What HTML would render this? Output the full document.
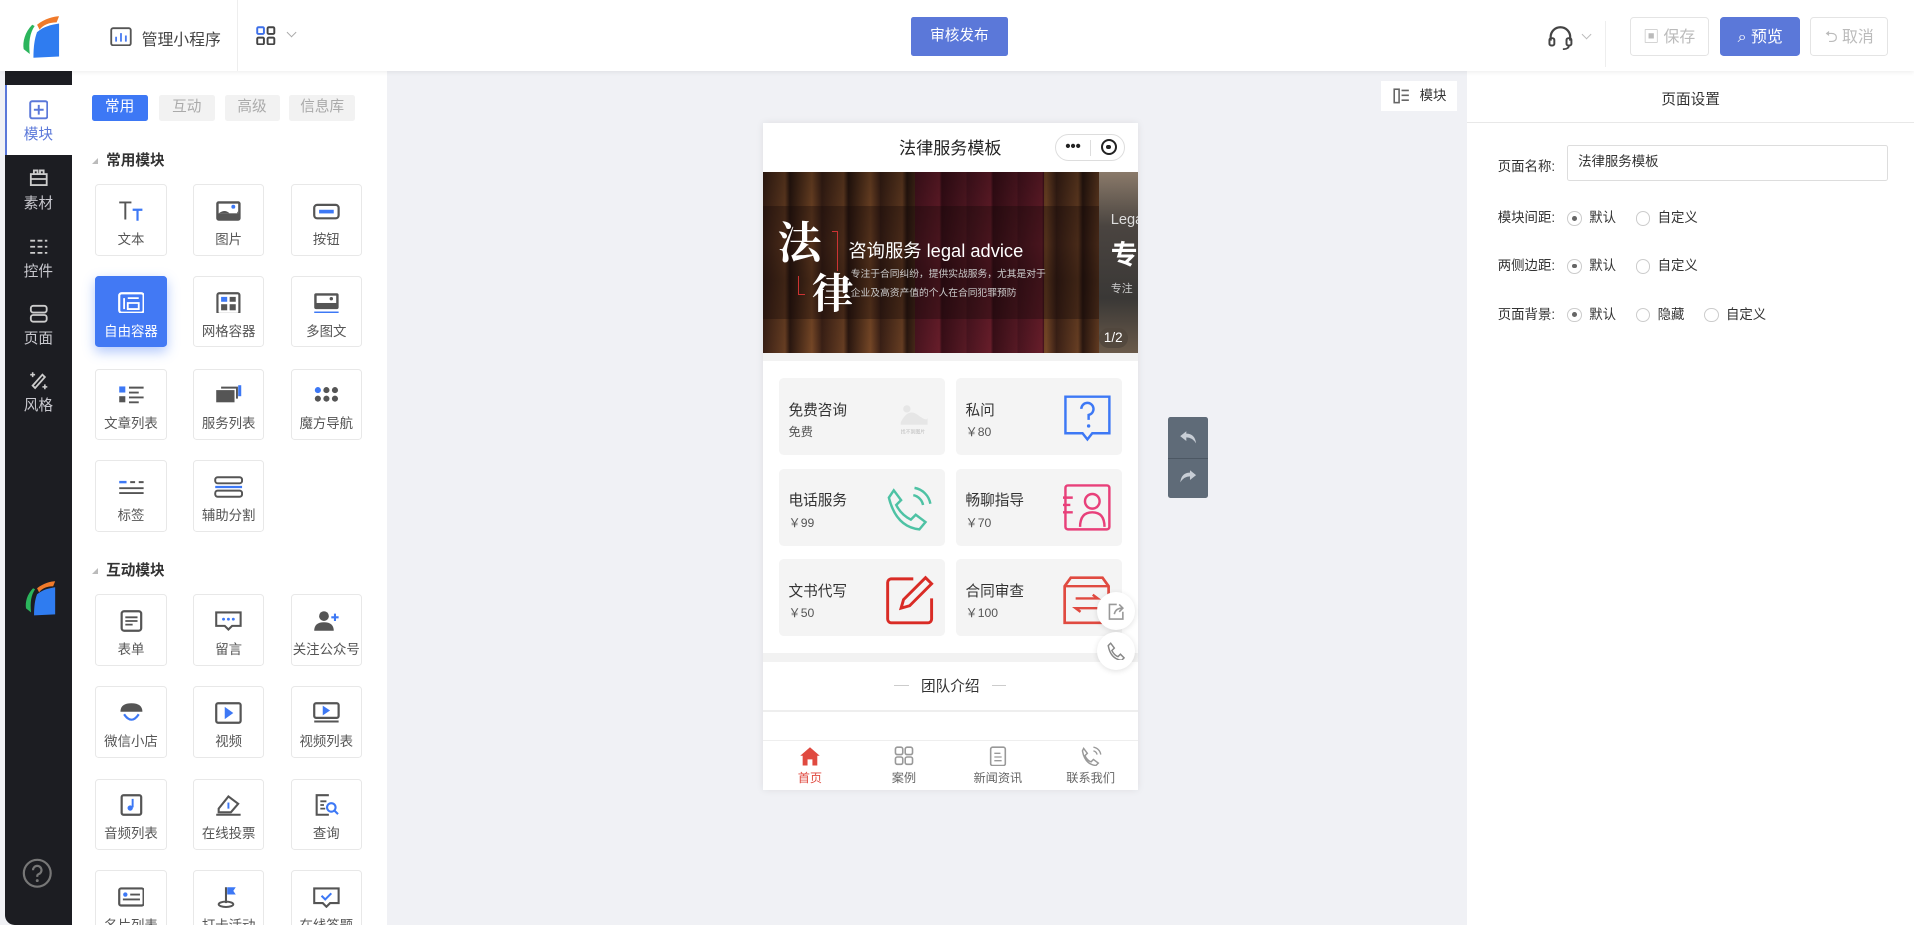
<!DOCTYPE html>
<html><head><meta charset="utf-8">
<style>
html,body{margin:0;padding:0;}
body{width:1914px;height:925px;overflow:hidden;background:#f0f1f5;font-family:"Liberation Sans","Noto Sans CJK SC",sans-serif;}
#z{zoom:1.22066;width:1568px;height:758px;position:relative;overflow:hidden;background:#f0f1f5;}
.a{position:absolute;}
.hdr{left:0;top:0;width:1568px;height:58px;background:#fff;box-shadow:0 1px 4px rgba(0,0,0,.08);z-index:3;}
.btn{position:absolute;top:14px;height:32px;border:1px solid #e4e4e4;border-radius:3px;font-size:13px;color:#bbb;line-height:32px;text-align:center;box-sizing:border-box;}
.side{left:4px;top:58px;width:55px;height:700px;background:#1c1d22;border-bottom-left-radius:8px;}
.si{position:absolute;left:0;width:55px;text-align:center;color:#c9c9cf;font-size:12px;}
.si svg{display:block;margin:0 auto 3px;}
.panel{left:59px;top:58px;width:258px;height:700px;background:#fff;}
.tab{position:absolute;top:20px;height:21px;line-height:21px;font-size:12px;text-align:center;border-radius:2px;background:#f2f2f2;color:#aaa;}
.sec{position:absolute;left:16px;font-size:12px;font-weight:bold;color:#333;}
.sec:before{content:"";display:inline-block;border:3px solid transparent;border-right-color:#bbb;border-bottom-color:#bbb;margin-right:7px;vertical-align:1px;}
.card{position:absolute;width:57px;height:57px;border:1px solid #e8e8e8;border-radius:3px;background:#fff;text-align:center;font-size:11px;color:#555;}
.card svg{display:block;margin:12px auto 5px;}
.card.on{background:#4279f4;border-color:#4279f4;color:#fff;box-shadow:0 4px 10px rgba(66,121,244,.4);}
.phone{left:625px;top:101px;width:307px;height:546px;background:#fff;box-shadow:0 0 6px rgba(0,0,0,.08);overflow:hidden;}
.cell{position:absolute;width:136px;height:63px;background:#f4f4f4;border-radius:4px;}
.cell .t{position:absolute;left:8px;top:17px;font-size:12px;color:#333;}
.cell .p{position:absolute;left:8px;top:36px;font-size:10px;color:#555;}
.cell svg{position:absolute;right:8px;top:12px;}
.rp{left:1202px;top:58px;width:366px;height:700px;background:#fff;}
.fl{position:absolute;left:25px;font-size:11px;color:#333;}
.rd{display:inline-block;width:12px;height:12px;border:1px solid #ccc;border-radius:50%;vertical-align:-3px;margin-right:6px;box-sizing:border-box;position:relative;}
.rd.c:after{content:"";position:absolute;left:3px;top:3px;width:4px;height:4px;border-radius:50%;background:#666;}
.opt{position:absolute;font-size:11px;color:#333;}
.tb{position:absolute;top:0;width:77px;text-align:center;font-size:10px;color:#666;}
.tb svg{display:block;margin:4px auto 1px;}
</style></head><body><div id="z">

<div class="a hdr">
  <svg class="a" style="left:16px;top:12px" width="34" height="36" viewBox="0 0 34 36"><path d="M10 8 C4 14 2 22 3 28 L8 32 C7 22 8 15 12 9Z" fill="#2bb55c"/><path d="M14 8 C20 3 28 1 32 1 L30 6 C24 6 19 8 16 12Z" fill="#f07a2a"/><path d="M14 14 C20 9 26 8 32 7 L32 34 L11 35 C11 26 12 19 14 14Z" fill="#2f7cf0"/></svg>
  <svg class="a" style="left:90px;top:22px" width="18" height="16" viewBox="0 0 18 16"><rect x="1" y="1" width="16" height="14" rx="1.5" fill="none" stroke="#555" stroke-width="1.5"/><path d="M5 12V8M9 12V5M13 12V7" stroke="#4a7cf0" stroke-width="1.5"/></svg>
  <div class="a" style="left:116px;top:22px;font-size:13px;color:#444">管理小程序</div>
  <div class="a" style="left:194px;top:0;width:1px;height:58px;background:#eee"></div>
  <svg class="a" style="left:210px;top:21px" width="16" height="16" viewBox="0 0 16 16"><rect x="1" y="1" width="5.5" height="5.5" rx="1" fill="none" stroke="#3d6fe8" stroke-width="1.6"/><rect x="9.5" y="1" width="5.5" height="5.5" rx="1" fill="none" stroke="#444" stroke-width="1.6"/><rect x="1" y="9.5" width="5.5" height="5.5" rx="1" fill="none" stroke="#444" stroke-width="1.6"/><rect x="9.5" y="9.5" width="5.5" height="5.5" rx="1" fill="none" stroke="#444" stroke-width="1.6"/></svg>
  <div class="a" style="left:236px;top:24px;width:5px;height:5px;border-right:1px solid #aaa;border-bottom:1px solid #aaa;transform:rotate(45deg)"></div>
  <div class="a" style="left:746px;top:14px;width:80px;height:32px;background:#5b78d9;color:#fff;font-size:12px;line-height:32px;text-align:center;border-radius:2px">审核发布</div>
  <svg class="a" style="left:1267px;top:21px" width="22" height="20" viewBox="0 0 22 20"><path d="M3 12V9a8 8 0 0 1 16 0v3" fill="none" stroke="#444" stroke-width="1.8"/><rect x="2" y="10" width="4" height="6" rx="1.5" fill="none" stroke="#444" stroke-width="1.6"/><rect x="16" y="10" width="4" height="6" rx="1.5" fill="none" stroke="#444" stroke-width="1.6"/><path d="M18 16q0 3-5 3" fill="none" stroke="#444" stroke-width="1.4"/></svg>
  <div class="a" style="left:1297px;top:25px;width:5px;height:5px;border-right:1px solid #bbb;border-bottom:1px solid #bbb;transform:rotate(45deg)"></div>
  <div class="a" style="left:1315px;top:17px;width:1px;height:38px;background:#eee"></div>
  <div class="btn" style="left:1335px;width:65px">▣ 保存</div>
  <div class="btn" style="left:1409px;width:66px;background:#5b78d9;border-color:#5b78d9;color:#fff">⌕ 预览</div>
  <div class="btn" style="left:1483px;width:64px">⮌ 取消</div>
</div>

<div class="a side">
  <div class="a" style="left:0;top:12px;width:55px;height:57px;background:#fff;border-left:2px solid #5b78d9;box-sizing:border-box"></div>
  <div class="si" style="top:24px;color:#5b78d9"><svg width="16" height="16" viewBox="0 0 16 16"><rect x="1" y="1" width="14" height="14" rx="1.5" fill="none" stroke="#5b78d9" stroke-width="1.6"/><path d="M8 4v8M4 8h8" stroke="#5b78d9" stroke-width="1.6"/></svg>模块</div>
  <div class="si" style="top:80px"><svg width="16" height="16" viewBox="0 0 16 16"><rect x="1.5" y="5" width="13" height="9" fill="none" stroke="#ccc" stroke-width="1.5"/><path d="M4 5V2h3v3M9 5V2h3v3M2 9h12" fill="none" stroke="#ccc" stroke-width="1.5"/></svg>素材</div>
  <div class="si" style="top:136px"><svg width="16" height="16" viewBox="0 0 16 16"><path d="M1 3h14M1 8h14M1 13h14" stroke="#ccc" stroke-width="1.5" stroke-dasharray="4 2"/></svg>控件</div>
  <div class="si" style="top:191px"><svg width="16" height="16" viewBox="0 0 16 16"><rect x="1.5" y="1.5" width="13" height="5.5" rx="2" fill="none" stroke="#ccc" stroke-width="1.5"/><rect x="1.5" y="9" width="13" height="5.5" rx="2" fill="none" stroke="#ccc" stroke-width="1.5"/></svg>页面</div>
  <div class="si" style="top:246px"><svg width="16" height="16" viewBox="0 0 16 16"><path d="M5 14L13 5l-2-2-8 9z" fill="none" stroke="#ccc" stroke-width="1.5"/><path d="M3 1v4M1 3h4M13 11v4M11 13h4" stroke="#ccc" stroke-width="1.3"/></svg>风格</div>
  <svg class="a" style="left:15px;top:417px" width="28" height="30" viewBox="0 0 34 36"><path d="M10 8 C4 14 2 22 3 28 L8 32 C7 22 8 15 12 9Z" fill="#2bb55c"/><path d="M14 8 C20 3 28 1 32 1 L30 6 C24 6 19 8 16 12Z" fill="#f07a2a"/><path d="M14 14 C20 9 26 8 32 7 L32 34 L11 35 C11 26 12 19 14 14Z" fill="#2f7cf0"/></svg>
  <svg class="a" style="left:14px;top:645px" width="25" height="25" viewBox="0 0 25 25"><circle cx="12.5" cy="12.5" r="11" fill="none" stroke="#777" stroke-width="1.8"/><path d="M9 10a3.5 3.5 0 1 1 4.5 3.3c-1 .4-1 1-1 2.2" fill="none" stroke="#777" stroke-width="1.8"/><circle cx="12.5" cy="18.5" r="1.2" fill="#777"/></svg>
</div>

<div class="a panel">
  <div class="tab" style="left:16px;width:46px;background:#3d78f5;color:#fff">常用</div>
  <div class="tab" style="left:71px;width:46px">互动</div>
  <div class="tab" style="left:125px;width:45px">高级</div>
  <div class="tab" style="left:178px;width:54px">信息库</div>
  <div class="sec" style="top:64px">常用模块</div>

  <div class="card" style="left:19px;top:93px"><svg width="22" height="18" viewBox="0 0 22 18"><path d="M1 2h10M6 2v14" stroke="#555" stroke-width="1.6"/><path d="M12 8h8M16 8v9" stroke="#3d78f5" stroke-width="1.8"/></svg>文本</div>
  <div class="card" style="left:99px;top:93px"><svg width="22" height="18" viewBox="0 0 22 18"><rect x="1" y="1" width="20" height="16" rx="2" fill="#555"/><rect x="3" y="3" width="16" height="8" fill="#fff"/><path d="M3 11q5-4 9 0t7-2v2z" fill="#555"/><circle cx="15" cy="5.5" r="1.6" fill="#3d78f5"/></svg>图片</div>
  <div class="card" style="left:179px;top:93px"><svg width="22" height="18" viewBox="0 0 22 18"><rect x="1" y="4" width="20" height="11" rx="2.5" fill="none" stroke="#555" stroke-width="1.8"/><rect x="5" y="8" width="12" height="3" fill="#3d78f5"/></svg>按钮</div>

  <div class="card on" style="left:19px;top:168px"><svg width="22" height="18" viewBox="0 0 22 18"><rect x="1" y="1" width="20" height="16" rx="2" fill="none" stroke="#fff" stroke-width="1.8"/><path d="M5 5v9M8 5h9M8 9h9v5H8z" fill="none" stroke="#fff" stroke-width="1.5"/></svg>自由容器</div>
  <div class="card" style="left:99px;top:168px"><svg width="22" height="18" viewBox="0 0 22 18"><rect x="2" y="1" width="18" height="17" rx="1.5" fill="none" stroke="#555" stroke-width="1.8"/><rect x="5" y="4" width="5" height="4" fill="#3d78f5"/><rect x="12" y="4" width="5" height="4" fill="#555"/><rect x="5" y="10" width="5" height="5" fill="#555"/><rect x="12" y="10" width="5" height="5" fill="#555"/></svg>网格容器</div>
  <div class="card" style="left:179px;top:168px"><svg width="22" height="18" viewBox="0 0 22 18"><rect x="1" y="1" width="20" height="13" rx="1.5" fill="#555"/><rect x="3" y="3" width="16" height="6" fill="#fff"/><circle cx="15" cy="5.5" r="1.4" fill="#555"/><rect x="1" y="16" width="20" height="1.5" fill="#3d78f5"/></svg>多图文</div>

  <div class="card" style="left:19px;top:244px"><svg width="22" height="18" viewBox="0 0 22 18"><rect x="1" y="2" width="5" height="5" fill="#3d78f5"/><rect x="1" y="10" width="5" height="5" fill="#555"/><path d="M9 3h12M9 7h8M9 11h12M9 15h8" stroke="#555" stroke-width="1.6"/></svg>文章列表</div>
  <div class="card" style="left:99px;top:244px"><svg width="22" height="18" viewBox="0 0 22 18"><rect x="1" y="5" width="15" height="10" fill="#555"/><path d="M5 3h13v9" fill="none" stroke="#555" stroke-width="1.6"/><rect x="19" y="1" width="2.5" height="9" fill="#3d78f5"/></svg>服务列表</div>
  <div class="card" style="left:179px;top:244px"><svg width="22" height="18" viewBox="0 0 22 18"><circle cx="4" cy="5" r="2.5" fill="#3d78f5"/><circle cx="11" cy="5" r="2.5" fill="#555"/><circle cx="18" cy="5" r="2.5" fill="#555"/><circle cx="4" cy="12" r="2.5" fill="#555"/><circle cx="11" cy="12" r="2.5" fill="#555"/><circle cx="18" cy="12" r="2.5" fill="#555"/></svg>魔方导航</div>

  <div class="card" style="left:19px;top:319px"><svg width="22" height="18" viewBox="0 0 22 18"><path d="M1 5h6" stroke="#3d78f5" stroke-width="2"/><path d="M10 5h4M17 5h4M1 10h20M1 14h20" stroke="#555" stroke-width="1.6"/></svg>标签</div>
  <div class="card" style="left:99px;top:319px"><svg width="24" height="18" viewBox="0 0 24 18"><rect x="1" y="1" width="22" height="5" rx="2" fill="none" stroke="#555" stroke-width="1.6"/><rect x="1" y="12" width="22" height="5" rx="2" fill="none" stroke="#555" stroke-width="1.6"/><path d="M1 9h22" stroke="#3d78f5" stroke-width="1.8"/></svg>辅助分割</div>

  <div class="sec" style="top:400px">互动模块</div>
  <div class="card" style="left:19px;top:429px"><svg width="22" height="18" viewBox="0 0 22 18"><rect x="3" y="1" width="16" height="16" rx="2" fill="none" stroke="#555" stroke-width="1.8"/><path d="M6 6h10M6 9h10M6 12h6" stroke="#555" stroke-width="1.5"/></svg>表单</div>
  <div class="card" style="left:99px;top:429px"><svg width="22" height="18" viewBox="0 0 22 18"><path d="M1 2h20v11h-7l-3 3-3-3H1z" fill="none" stroke="#555" stroke-width="1.7"/><circle cx="7" cy="7.5" r="1.2" fill="#3d78f5"/><circle cx="11" cy="7.5" r="1.2" fill="#3d78f5"/><circle cx="15" cy="7.5" r="1.2" fill="#3d78f5"/></svg>留言</div>
  <div class="card" style="left:179px;top:429px"><svg width="22" height="18" viewBox="0 0 22 18"><circle cx="9" cy="5" r="4" fill="#555"/><path d="M1 17q0-7 8-7t8 7z" fill="#555"/><path d="M18 3v6M15 6h6" stroke="#3d78f5" stroke-width="1.7"/></svg>关注公众号</div>

  <div class="card" style="left:19px;top:504px"><svg width="22" height="18" viewBox="0 0 22 18"><path d="M2 8q0-7 9-7t9 7z" fill="#555"/><path d="M5 10q6 9 12 0" fill="none" stroke="#3d78f5" stroke-width="1.8"/></svg>微信小店</div>
  <div class="card" style="left:99px;top:504px"><svg width="22" height="18" viewBox="0 0 22 18"><rect x="1" y="1" width="20" height="16" rx="1.5" fill="none" stroke="#555" stroke-width="1.8"/><path d="M8 4v10l7-5z" fill="#3d78f5"/></svg>视频</div>
  <div class="card" style="left:179px;top:504px"><svg width="22" height="18" viewBox="0 0 22 18"><rect x="1" y="1" width="20" height="12" rx="1.5" fill="none" stroke="#555" stroke-width="1.8"/><path d="M8 3v8l6-4z" fill="#3d78f5"/><path d="M1 16h20" stroke="#555" stroke-width="1.6"/></svg>视频列表</div>

  <div class="card" style="left:19px;top:580px"><svg width="22" height="18" viewBox="0 0 22 18"><rect x="3" y="1" width="16" height="16" rx="1.5" fill="none" stroke="#555" stroke-width="1.8"/><path d="M12 4v7" stroke="#3d78f5" stroke-width="1.6"/><circle cx="10" cy="11.5" r="2.2" fill="#3d78f5"/></svg>音频列表</div>
  <div class="card" style="left:99px;top:580px"><svg width="22" height="18" viewBox="0 0 22 18"><path d="M3 12l8-10 8 6-6 7H3z" fill="none" stroke="#555" stroke-width="1.7"/><path d="M1 17h20" stroke="#555" stroke-width="1.6"/><path d="M11 7v5" stroke="#3d78f5" stroke-width="1.6"/></svg>在线投票</div>
  <div class="card" style="left:179px;top:580px"><svg width="22" height="18" viewBox="0 0 22 18"><path d="M13 1H3v16h10" fill="none" stroke="#555" stroke-width="1.7"/><path d="M6 6h5M6 9h3M6 12h4" stroke="#555" stroke-width="1.5"/><circle cx="15" cy="11" r="3.5" fill="none" stroke="#3d78f5" stroke-width="1.7"/><path d="M17.5 13.5l3 3" stroke="#3d78f5" stroke-width="1.7"/></svg>查询</div>

  <div class="card" style="left:19px;top:655px"><svg width="22" height="18" viewBox="0 0 22 18"><rect x="1" y="2" width="20" height="14" rx="1.5" fill="none" stroke="#555" stroke-width="1.8"/><circle cx="6" cy="7" r="1.8" fill="#3d78f5"/><path d="M10 7h8M4 11h14" stroke="#555" stroke-width="1.5"/></svg>名片列表</div>
  <div class="card" style="left:99px;top:655px"><svg width="22" height="18" viewBox="0 0 22 18"><path d="M9 1v13" stroke="#555" stroke-width="1.7"/><path d="M10 1h7l-2 3 2 3h-7z" fill="#3d78f5"/><ellipse cx="9" cy="15" rx="6" ry="2.2" fill="none" stroke="#555" stroke-width="1.6"/></svg>打卡活动</div>
  <div class="card" style="left:179px;top:655px"><svg width="22" height="18" viewBox="0 0 22 18"><path d="M1 2h20v12h-7l-3 3-3-3H1z" fill="none" stroke="#555" stroke-width="1.7"/><path d="M7 8l3 3 5-5" fill="none" stroke="#3d78f5" stroke-width="1.7"/></svg>在线答题</div>
</div>

<div class="a" style="left:1131px;top:66px;width:63px;height:25px;background:#fff;font-size:11px;color:#333;line-height:25px">
  <svg class="a" style="left:10px;top:6px" width="14" height="13" viewBox="0 0 14 13"><rect x="1" y="1" width="4" height="11" fill="none" stroke="#666" stroke-width="1.3"/><path d="M7 2h6M7 6h6M7 10h6" stroke="#666" stroke-width="1.3"/></svg>
  <span class="a" style="left:32px;top:0">模块</span>
</div>

<div class="a phone">
  <div class="a" style="left:0;top:0;width:307px;height:40px;text-align:center;line-height:42px;font-size:14px;color:#222">法律服务模板</div>
  <div class="a" style="left:239px;top:9px;width:58px;height:22px;border:1px solid #ddd;border-radius:12px;box-sizing:border-box">
    <div class="a" style="left:8px;top:4px;font-size:12px;line-height:12px;font-weight:bold;color:#222">•••</div>
    <div class="a" style="left:28px;top:4px;width:1px;height:13px;background:#ddd"></div>
    <div class="a" style="left:37px;top:3px;width:10px;height:10px;border:2px solid #222;border-radius:50%"><div style="width:4px;height:4px;margin:3px;background:#222;border-radius:50%"></div></div>
  </div>
  <div class="a" style="left:0;top:40px;width:275px;height:148px;background:repeating-linear-gradient(90deg,#3a2016 0,#6a4024 18px,#2a1710 22px,#7a4a28 40px,#3f2318 48px),#3a2016"></div>
  <div class="a" style="left:125px;top:40px;width:105px;height:148px;background:repeating-linear-gradient(90deg,#4a1420 0,#6b1e2c 20px,#3a0e18 22px,#5a1a26 42px)"></div>
  <div class="a" style="left:0;top:40px;width:275px;height:148px;background:linear-gradient(180deg,rgba(0,0,0,.3),rgba(0,0,0,.05) 40%,rgba(0,0,0,.2) 60%,rgba(40,20,10,.05))"></div>
  <div class="a" style="left:0;top:68px;width:275px;height:92px;background:rgba(20,10,8,.35)"></div>
  <div class="a" style="left:12px;top:78px;font-family:'Noto Serif CJK SC',serif;font-size:36px;color:#fff;font-weight:bold;line-height:36px">法</div>
  <div class="a" style="left:40px;top:120px;font-family:'Noto Serif CJK SC',serif;font-size:34px;color:#fff;font-weight:bold;line-height:34px">律</div>
  <div class="a" style="left:57px;top:88px;width:4px;height:32px;border-right:1px solid #c33;border-top:1px solid #c33"></div>
  <div class="a" style="left:29px;top:125px;width:5px;height:15px;border-left:1px solid #c33;border-bottom:1px solid #c33"></div>
  <div class="a" style="left:70px;top:93px;font-size:15px;color:#fff;white-space:nowrap">咨询服务 legal advice</div>
  <div class="a" style="left:72px;top:116px;font-size:8px;color:#ccc;line-height:16px;white-space:nowrap">专注于合同纠纷，提供实战服务，尤其是对于<br>企业及高资产值的个人在合同犯罪预防</div>
  <div class="a" style="left:275px;top:40px;width:32px;height:148px;background:linear-gradient(180deg,#8a7a6a,#4a4440 30%,#3a3836 70%,#6a5a4a)"></div>
  <div class="a" style="left:285px;top:73px;font-size:12px;color:#ddd">Lega</div>
  <div class="a" style="left:285px;top:90px;font-size:22px;color:#fff;font-weight:bold">专</div>
  <div class="a" style="left:285px;top:128px;font-size:9px;color:#ccc">专注</div>
  <div class="a" style="left:275px;top:168px;width:24px;height:16px;background:rgba(80,70,60,.8);border-radius:8px;color:#fff;font-size:11px;text-align:center;line-height:16px">1/2</div>
  <div class="a" style="left:0;top:188px;width:307px;height:7px;background:#f2f2f2"></div>

  <div class="cell" style="left:13px;top:209px"><div class="t">免费咨询</div><div class="p">免费</div><svg width="36" height="36" viewBox="0 0 36 36"><path d="M8 24q6-12 14-6t8 2v6H8z" fill="#e6e6e6"/><circle cx="13" cy="13" r="3" fill="#e6e6e6"/><text x="18" y="33" font-size="4" fill="#bbb" text-anchor="middle">找不到图片</text></svg></div>
  <div class="cell" style="left:158px;top:209px"><div class="t">私问</div><div class="p">￥80</div><svg width="40" height="40" viewBox="0 0 40 40"><path d="M2 3h36v30H24l-4 5-4-5H2z" fill="none" stroke="#3d78f5" stroke-width="2"/><path d="M15 13a5 5 0 1 1 6 5v4" fill="none" stroke="#3d78f5" stroke-width="2"/><circle cx="21" cy="27" r="1.4" fill="#3d78f5"/></svg></div>
  <div class="cell" style="left:13px;top:283px"><div class="t">电话服务</div><div class="p">￥99</div><svg width="42" height="42" viewBox="0 0 42 42"><path d="M8 6l6 8-4 4q4 8 12 12l4-4 8 6-5 6Q10 36 4 12z" fill="none" stroke="#4ec2a4" stroke-width="2"/><path d="M24 10a10 10 0 0 1 8 8M25 4a16 16 0 0 1 13 13" fill="none" stroke="#4ec2a4" stroke-width="2"/></svg></div>
  <div class="cell" style="left:158px;top:283px"><div class="t">畅聊指导</div><div class="p">￥70</div><svg width="40" height="40" viewBox="0 0 40 40"><rect x="2" y="2" width="36" height="36" rx="2" fill="none" stroke="#e8407a" stroke-width="2"/><circle cx="24" cy="15" r="6" fill="none" stroke="#e8407a" stroke-width="2"/><path d="M14 36q0-12 10-12t10 12" fill="none" stroke="#e8407a" stroke-width="2"/><path d="M0 12h8M0 18h6M0 24h8" stroke="#e8407a" stroke-width="2"/></svg></div>
  <div class="cell" style="left:13px;top:357px"><div class="t">文书代写</div><div class="p">￥50</div><svg width="42" height="42" viewBox="0 0 42 42"><path d="M24 4H6a3 3 0 0 0-3 3v30a3 3 0 0 0 3 3h30a3 3 0 0 0 3-3V20" fill="none" stroke="#d92b25" stroke-width="2.4"/><path d="M34 3l5 5-18 18-7 2 2-7z" fill="none" stroke="#d92b25" stroke-width="2.4"/></svg></div>
  <div class="cell" style="left:158px;top:357px"><div class="t">合同审查</div><div class="p">￥100</div><svg width="42" height="42" viewBox="0 0 42 42"><path d="M3 10l5-7h26l5 7v30H3z" fill="none" stroke="#e04a40" stroke-width="2.2"/><path d="M3 10h36M12 20h18l-4-3M30 28H12l4 3" fill="none" stroke="#e04a40" stroke-width="2"/></svg></div>

  <div class="a" style="left:0;top:434px;width:307px;height:7px;background:#f2f2f2"></div>
  <div class="a" style="left:0;top:452px;width:307px;text-align:center;font-size:12px;color:#333"><span style="display:inline-block;width:12px;height:1px;background:#ccc;vertical-align:4px;margin-right:10px"></span>团队介绍<span style="display:inline-block;width:12px;height:1px;background:#ccc;vertical-align:4px;margin-left:10px"></span></div>
  <div class="a" style="left:0;top:481px;width:307px;height:1px;background:#eee"></div>
  <div class="a" style="left:0;top:505px;width:307px;height:41px;border-top:1px solid #eee">
    <div class="tb" style="left:0;color:#e04a40"><svg width="18" height="17" viewBox="0 0 18 17"><path d="M9 1L1 8h2v8h4v-5h4v5h4V8h2z" fill="#e04a40"/></svg>首页</div>
    <div class="tb" style="left:77px"><svg width="18" height="17" viewBox="0 0 18 17"><rect x="2" y="1" width="6" height="6" rx="1.5" fill="none" stroke="#999" stroke-width="1.3"/><rect x="10" y="1" width="6" height="6" rx="1.5" fill="none" stroke="#999" stroke-width="1.3"/><rect x="2" y="9" width="6" height="6" rx="1.5" fill="none" stroke="#999" stroke-width="1.3"/><rect x="10" y="9" width="6" height="6" rx="1.5" fill="none" stroke="#999" stroke-width="1.3"/></svg>案例</div>
    <div class="tb" style="left:154px"><svg width="18" height="17" viewBox="0 0 18 17"><rect x="3" y="1" width="12" height="15" rx="1.5" fill="none" stroke="#999" stroke-width="1.3"/><path d="M6 6h5M6 9h6M6 12h6" stroke="#999" stroke-width="1.1"/></svg>新闻资讯</div>
    <div class="tb" style="left:230px"><svg width="18" height="17" viewBox="0 0 18 17"><path d="M3 2l3 4-2 2q2 4 5 5l2-2 4 3-2 2Q4 15 2 4z" fill="none" stroke="#999" stroke-width="1.2"/><path d="M11 4a4 4 0 0 1 3 3M11 1a7 7 0 0 1 6 6" fill="none" stroke="#999" stroke-width="1.1"/></svg>联系我们</div>
  </div>
</div>
<div class="a" style="left:899px;top:485px;width:31px;height:31px;border-radius:50%;background:#fff;box-shadow:0 1px 5px rgba(0,0,0,.12)"><svg style="margin:8px" width="15" height="15" viewBox="0 0 15 15"><path d="M8 2H2v12h11V8" fill="none" stroke="#999" stroke-width="1.3"/><path d="M6 10q1-5 7-5M10 2l3 3-3 3" fill="none" stroke="#999" stroke-width="1.3"/></svg></div>
<div class="a" style="left:899px;top:518px;width:31px;height:31px;border-radius:50%;background:#fff;box-shadow:0 1px 5px rgba(0,0,0,.12)"><svg style="margin:8px" width="15" height="15" viewBox="0 0 15 15"><path d="M3 1l3 4-2 2q2 4 5 5l2-2 3 3-2 2Q3 14 1 3z" fill="none" stroke="#888" stroke-width="1.2"/></svg></div>

<div class="a" style="left:957px;top:342px;width:33px;height:66px;background:#5f6b78;border-radius:2px">
  <svg class="a" style="left:9px;top:10px" width="15" height="13" viewBox="0 0 15 13"><path d="M6 1L1 5l5 4V6q5 0 8 5-1-8-8-8z" fill="#c8ced6"/></svg>
  <div class="a" style="left:0;top:33px;width:33px;height:1px;background:#4c5763"></div>
  <svg class="a" style="left:9px;top:42px" width="15" height="13" viewBox="0 0 15 13"><path d="M9 1l5 4-5 4V6q-5 0-8 5 1-8 8-8z" fill="#c8ced6"/></svg>
</div>

<div class="a rp">
  <div class="a" style="left:0;top:0;width:366px;height:42px;border-bottom:1px solid #e8e8e8"></div>
  <div class="a" style="left:0;top:14px;width:366px;text-align:center;font-size:12px;color:#333">页面设置</div>
  <div class="fl" style="top:69px">页面名称:</div>
  <div class="a" style="left:82px;top:61px;width:263px;height:29px;border:1px solid #ddd;border-radius:2px;box-sizing:border-box;font-size:11px;color:#333;line-height:27px;padding-left:8px">法律服务模板</div>
  <div class="fl" style="top:111px">模块间距:</div>
  <div class="opt" style="left:82px;top:111px"><span class="rd c"></span>默认</div>
  <div class="opt" style="left:138px;top:111px"><span class="rd"></span>自定义</div>
  <div class="fl" style="top:150px">两侧边距:</div>
  <div class="opt" style="left:82px;top:150px"><span class="rd c"></span>默认</div>
  <div class="opt" style="left:138px;top:150px"><span class="rd"></span>自定义</div>
  <div class="fl" style="top:190px">页面背景:</div>
  <div class="opt" style="left:82px;top:190px"><span class="rd c"></span>默认</div>
  <div class="opt" style="left:138px;top:190px"><span class="rd"></span>隐藏</div>
  <div class="opt" style="left:194px;top:190px"><span class="rd"></span>自定义</div>
</div>

</div></body></html>
